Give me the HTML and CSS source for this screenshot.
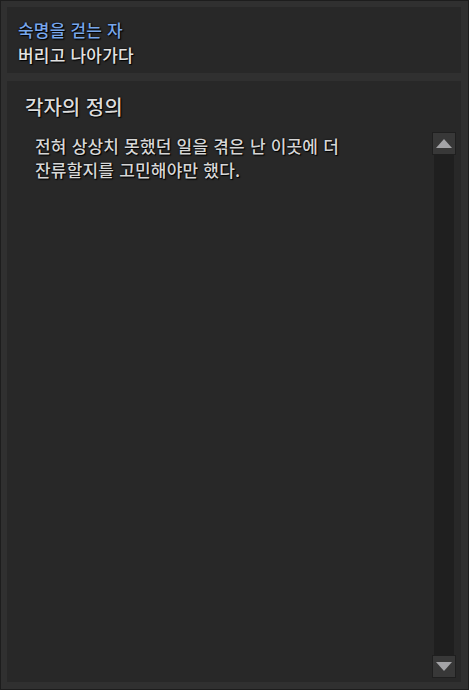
FILE: index.html
```html
<!DOCTYPE html>
<html lang="ko">
<head>
<meta charset="utf-8">
<link rel="stylesheet" href="styles.css">
</head>
<body>
<div class="frame">
  <div class="panel head">
    <div class="quest">숙명을 걷는 자</div>
    <div class="sub">버리고 나아가다</div>
  </div>
  <div class="panel detail">
    <div class="title">각자의 정의</div>
    <div class="content">
      <div class="text">전혀 상상치 못했던 일을 겪은 난 이곳에 더<br>잔류할지를 고민해야만 했다.</div>
      <div class="scrollbar">
        <div class="btn"><svg width="16" height="9" viewBox="0 0 16 9"><polygon points="8,0 16,9 0,9" fill="#a3a3a6"/></svg></div>
        <div class="track"></div>
        <div class="btn"><svg width="16" height="9" viewBox="0 0 16 9"><polygon points="0,0 16,0 8,9" fill="#a3a3a6"/></svg></div>
      </div>
    </div>
  </div>
</div>
</body>
</html>
```
FILE: styles.css
```css
html, body {
  margin: 0;
  padding: 0;
  background: #1c1c1c;
}
body {
  font-family: "Noto Sans CJK KR", "Noto Sans", sans-serif;
  font-weight: 500;
}
.frame {
  box-sizing: border-box;
  width: 469px;
  height: 690px;
  border: 1px solid #1d1d1d;
  background: #303030;
  padding: 6px 7px 7px 6px;
  display: flex;
  flex-direction: column;
  gap: 8px;
}
.panel {
  background: #282828;
}
.head {
  height: 66px;
  box-sizing: border-box;
  padding: 10px 11px 0;
  font-size: 17px;
  line-height: 25px;
  letter-spacing: 0.2px;
}
.quest {
  color: #78a6ea;
  text-shadow: 0 0 2px #000, 1px 1px 1px #000;
}
.sub {
  color: #e2e2e2;
  text-shadow: 0 0 2px #000, 1px 1px 1px #000;
}
.detail {
  flex: 1;
  display: flex;
  flex-direction: column;
  padding: 12px 5px 4px 18px;
}
.title {
  color: #dcdcdc;
  font-size: 20px;
  line-height: 28px;
  height: 39px;
  text-shadow: 0 0 2px #000, 1px 1px 1px #000;
}
.content {
  flex: 1;
  display: flex;
}
.text {
  flex: 1;
  padding: 2px 0 0 10px;
  color: #d6d6d6;
  font-size: 17px;
  line-height: 24px;
  letter-spacing: 0.2px;
  text-shadow: 0 0 2px #000, 1px 1px 1px #000;
}
.scrollbar {
  width: 24px;
  display: flex;
  flex-direction: column;
  align-items: center;
}
.btn {
  box-sizing: border-box;
  width: 24px;
  height: 23px;
  background: #383838;
  border: 1px solid #1f1f1f;
  display: flex;
  align-items: center;
  justify-content: center;
}
.track {
  flex: 1;
  width: 20px;
  background: #1f1f1f;
}
```
